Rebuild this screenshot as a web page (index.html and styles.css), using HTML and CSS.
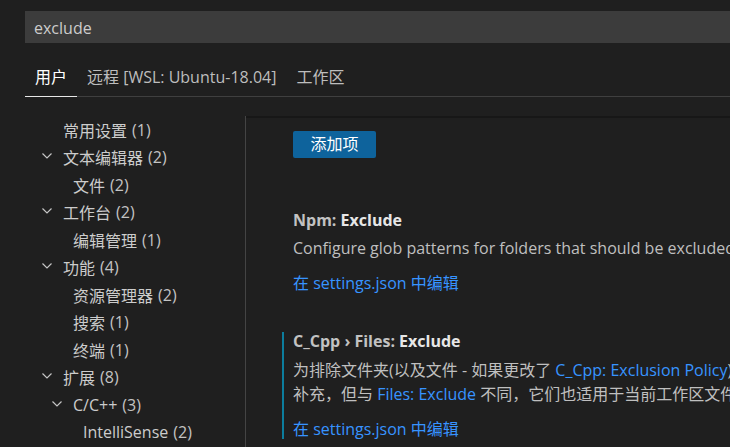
FILE: index.html
```html
<!DOCTYPE html>
<html lang="zh-CN">
<head>
<meta charset="utf-8">
<title>设置</title>
<link rel="stylesheet" href="styles.css">
</head>
<body>
<div class="editor">
  <div class="search">exclude</div>
  <div class="tabs">
    <div class="tab active">用户</div>
    <div class="tab">远程 [WSL: Ubuntu-18.04]</div>
    <div class="tab">工作区</div>
  </div>
  <div class="split">
    <div class="toc">
      <div class="row d1"><span class="twistie"></span><span class="label">常用设置</span><span class="count">(1)</span></div>
      <div class="row d1"><span class="twistie"><svg viewBox="0 0 10 6" width="10" height="6"><path d="M0.5 0.5 L5 5 L9.5 0.5" /></svg></span><span class="label">文本编辑器</span><span class="count">(2)</span></div>
      <div class="row d2"><span class="twistie"></span><span class="label">文件</span><span class="count">(2)</span></div>
      <div class="row d1"><span class="twistie"><svg viewBox="0 0 10 6" width="10" height="6"><path d="M0.5 0.5 L5 5 L9.5 0.5" /></svg></span><span class="label">工作台</span><span class="count">(2)</span></div>
      <div class="row d2"><span class="twistie"></span><span class="label">编辑管理</span><span class="count">(1)</span></div>
      <div class="row d1"><span class="twistie"><svg viewBox="0 0 10 6" width="10" height="6"><path d="M0.5 0.5 L5 5 L9.5 0.5" /></svg></span><span class="label">功能</span><span class="count">(4)</span></div>
      <div class="row d2"><span class="twistie"></span><span class="label">资源管理器</span><span class="count">(2)</span></div>
      <div class="row d2"><span class="twistie"></span><span class="label">搜索</span><span class="count">(1)</span></div>
      <div class="row d2"><span class="twistie"></span><span class="label">终端</span><span class="count">(1)</span></div>
      <div class="row d1"><span class="twistie"><svg viewBox="0 0 10 6" width="10" height="6"><path d="M0.5 0.5 L5 5 L9.5 0.5" /></svg></span><span class="label">扩展</span><span class="count">(8)</span></div>
      <div class="row d2"><span class="twistie"><svg viewBox="0 0 10 6" width="10" height="6"><path d="M0.5 0.5 L5 5 L9.5 0.5" /></svg></span><span class="label">C/C++</span><span class="count">(3)</span></div>
      <div class="row d3"><span class="twistie"></span><span class="label">IntelliSense</span><span class="count">(2)</span></div>
    </div>
    <div class="settings">
      <button class="add-btn">添加项</button>
      <div class="item first">
        <div class="title"><span class="cat">Npm: </span><span class="key">Exclude</span></div>
        <div class="desc"><span class="line">Configure glob patterns for folders that should be excluded from automatic script detection.</span></div>
        <a class="link">在 settings.json 中编辑</a>
      </div>
      <div class="item modified">
        <div class="title"><span class="cat">C_Cpp › Files: </span><span class="key">Exclude</span></div>
        <div class="desc">
          <span class="line">为排除文件夹(以及文件 - 如果更改了 <a class="ref">C_Cpp: Exclusion Policy</a>)配置 glob 模式。这是对 <a class="ref">Files: Exclude</a> 设置的</span>
          <span class="line">补充，但与 <a class="ref">Files: Exclude</a> 不同，它们也适用于当前工作区文件夹以外的路径，并且不会从资源管理器视图中删除。</span>
        </div>
        <a class="link">在 settings.json 中编辑</a>
      </div>
    </div>
  </div>
</div>
</body>
</html>
```

FILE: styles.css
```css
html, body {
  margin: 0;
  padding: 0;
  background: #1f1f1f;
  overflow: hidden;
  height: 100%;
}

.editor {
  font-family: "Open Sans", "Noto Sans CJK SC", sans-serif;
  font-size: 16px;
  color: #cccccc;
  display: flex;
  flex-direction: column;
  height: 100%;
}

.search {
  margin: 11px 0 0 25px;
  height: 32px;
  box-sizing: border-box;
  padding-top: 2px;
  line-height: 30px;
  background: #3c3c3c;
  padding-left: 9px;
  color: #cccccc;
}

.tabs {
  display: flex;
  margin: 22px 0 0 25px;
  border-bottom: 1px solid #3f3f3f;
}

.tab {
  padding: 0 10px 7px;
  line-height: 24px;
  color: #bdbdbd;
  white-space: nowrap;
}

.tab.active {
  color: #ffffff;
  box-shadow: inset 0 -1px 0 #e7e7e7;
  margin-bottom: -1px;
  padding-bottom: 8px;
}

.split {
  display: flex;
  margin-top: 19px;
  flex: 1;
  min-height: 0;
}

.toc {
  width: 245px;
  flex: none;
  border-right: 1px solid #444444;
  padding-top: 0;
}

.row {
  display: flex;
  align-items: center;
  height: 27.5px;
  white-space: nowrap;
}

.row.d1 { padding-left: 38px; }
.row.d2 { padding-left: 48px; }
.row.d3 { padding-left: 58px; }

.twistie {
  width: 25px;
  flex: none;
  display: flex;
  align-items: center;
  padding-left: 4px;
  box-sizing: border-box;
  margin-top: -2px;
}

.twistie svg path {
  fill: none;
  stroke: #c5c5c5;
  stroke-width: 1.2;
}

.count {
  margin-left: 5px;
  color: #c3c3c3;
}

.settings {
  flex: 1;
  min-width: 0;
  border-top: 2px solid #171717;
  padding-top: 13px;
  padding-left: 36px;
}

.add-btn {
  display: block;
  margin-left: 11px;
  width: 83px;
  height: 27px;
  border: none;
  border-radius: 2px;
  background: #0e639c;
  color: #ffffff;
  font: inherit;
  font-size: 16px;
  line-height: 27px;
  padding: 0;
}

.item {
  border-left: 2px solid transparent;
  padding-left: 9px;
  white-space: nowrap;
}

.item.first {
  margin-top: 52.5px;
}

.item.modified {
  margin-top: 39px;
  border-left-color: #0c7d9d;
}

.title {
  line-height: 18px;
  font-weight: 700;
}

.title .cat {
  color: #c2c2c2;
}

.title .key {
  color: #e7e7e7;
}

.desc {
  margin-top: 7.5px;
  line-height: 24px;
  color: #bfbfbf;
}

.desc .line {
  display: block;
}

.ref {
  color: #3794ff;
}

.link {
  display: block;
  margin-top: 13px;
  line-height: 20px;
  color: #3794ff;
}
```
